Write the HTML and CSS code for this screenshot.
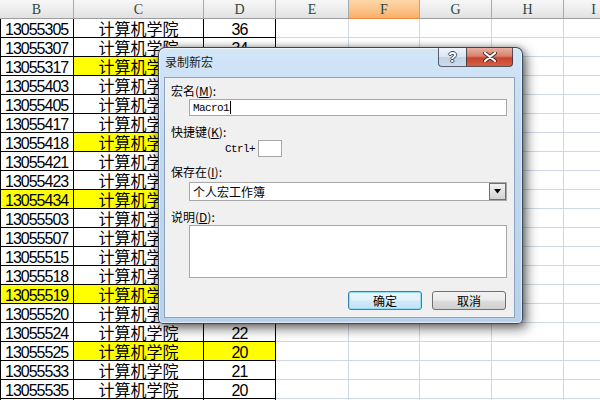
FILE: index.html
```html
<!DOCTYPE html>
<html lang="zh">
<head>
<meta charset="utf-8">
<link rel="stylesheet" href="styles.css">
</head>
<body>
<div class="sheet">
  <div class="h">B</div><div class="h">C</div><div class="h">D</div><div class="h">E</div><div class="h sel">F</div><div class="h">G</div><div class="h">H</div><div class="h">I</div>

  <div class="c k b">13055305</div><div class="c k m">计算机学院</div><div class="c k d">36</div><div class="c"></div><div class="c"></div><div class="c"></div><div class="c"></div><div class="c"></div>
  <div class="c k b">13055307</div><div class="c k m">计算机学院</div><div class="c k d">34</div><div class="c"></div><div class="c"></div><div class="c"></div><div class="c"></div><div class="c"></div>
  <div class="c k b">13055317</div><div class="c k m y">计算机学院</div><div class="c k d y"></div><div class="c"></div><div class="c"></div><div class="c"></div><div class="c"></div><div class="c"></div>
  <div class="c k b">13055403</div><div class="c k m">计算机学院</div><div class="c k d"></div><div class="c"></div><div class="c"></div><div class="c"></div><div class="c"></div><div class="c"></div>
  <div class="c k b">13055405</div><div class="c k m">计算机学院</div><div class="c k d"></div><div class="c"></div><div class="c"></div><div class="c"></div><div class="c"></div><div class="c"></div>
  <div class="c k b">13055417</div><div class="c k m">计算机学院</div><div class="c k d"></div><div class="c"></div><div class="c"></div><div class="c"></div><div class="c"></div><div class="c"></div>
  <div class="c k b">13055418</div><div class="c k m y">计算机学院</div><div class="c k d y"></div><div class="c"></div><div class="c"></div><div class="c"></div><div class="c"></div><div class="c"></div>
  <div class="c k b">13055421</div><div class="c k m">计算机学院</div><div class="c k d"></div><div class="c"></div><div class="c"></div><div class="c"></div><div class="c"></div><div class="c"></div>
  <div class="c k b">13055423</div><div class="c k m">计算机学院</div><div class="c k d"></div><div class="c"></div><div class="c"></div><div class="c"></div><div class="c"></div><div class="c"></div>
  <div class="c k b y">13055434</div><div class="c k m y">计算机学院</div><div class="c k d y"></div><div class="c"></div><div class="c"></div><div class="c"></div><div class="c"></div><div class="c"></div>
  <div class="c k b">13055503</div><div class="c k m">计算机学院</div><div class="c k d"></div><div class="c"></div><div class="c"></div><div class="c"></div><div class="c"></div><div class="c"></div>
  <div class="c k b">13055507</div><div class="c k m">计算机学院</div><div class="c k d"></div><div class="c"></div><div class="c"></div><div class="c"></div><div class="c"></div><div class="c"></div>
  <div class="c k b">13055515</div><div class="c k m">计算机学院</div><div class="c k d"></div><div class="c"></div><div class="c"></div><div class="c"></div><div class="c"></div><div class="c"></div>
  <div class="c k b">13055518</div><div class="c k m">计算机学院</div><div class="c k d"></div><div class="c"></div><div class="c"></div><div class="c"></div><div class="c"></div><div class="c"></div>
  <div class="c k b y">13055519</div><div class="c k m y">计算机学院</div><div class="c k d y"></div><div class="c"></div><div class="c"></div><div class="c"></div><div class="c"></div><div class="c"></div>
  <div class="c k b">13055520</div><div class="c k m">计算机学院</div><div class="c k d"></div><div class="c"></div><div class="c"></div><div class="c"></div><div class="c"></div><div class="c"></div>
  <div class="c k b">13055524</div><div class="c k m">计算机学院</div><div class="c k d">22</div><div class="c"></div><div class="c"></div><div class="c"></div><div class="c"></div><div class="c"></div>
  <div class="c k b">13055525</div><div class="c k m y">计算机学院</div><div class="c k d y">20</div><div class="c"></div><div class="c"></div><div class="c"></div><div class="c"></div><div class="c"></div>
  <div class="c k b">13055533</div><div class="c k m">计算机学院</div><div class="c k d">21</div><div class="c"></div><div class="c"></div><div class="c"></div><div class="c"></div><div class="c"></div>
  <div class="c k b">13055535</div><div class="c k m">计算机学院</div><div class="c k d">20</div><div class="c"></div><div class="c"></div><div class="c"></div><div class="c"></div><div class="c"></div>
  <div class="c k b"></div><div class="c k m"></div><div class="c k d"></div><div class="c"></div><div class="c"></div><div class="c"></div><div class="c"></div><div class="c"></div>
</div>

<div class="dialog">
  <div class="titlebar">
    <span class="title">录制新宏</span>
    <div class="capbtns">
      <div class="cap help">?</div>
      <div class="cap close">
        <svg width="14" height="10" viewBox="0 0 14 10">
          <path d="M2 1 L12 9 M12 1 L2 9" stroke="#4a2a25" stroke-width="4" stroke-linecap="round"/>
          <path d="M2 1 L12 9 M12 1 L2 9" stroke="#ffffff" stroke-width="2.2" stroke-linecap="round"/>
        </svg>
      </div>
    </div>
  </div>
  <div class="client">
    <div class="lbl">宏名(<u>M</u>):</div>
    <div class="field name"><span class="mono">Macro1</span><span class="caret"></span></div>
    <div class="lbl gap9">快捷键(<u>K</u>):</div>
    <div class="shortcut"><span class="mono ctrl">Ctrl+</span><div class="keybox"></div></div>
    <div class="lbl gap8">保存在(<u>I</u>):</div>
    <div class="field select"><span class="seltext">个人宏工作簿</span>
      <div class="arrow"><svg width="7" height="5" viewBox="0 0 7 5"><path d="M0 0 H7 L3.5 4.5 Z" fill="#000"/></svg></div>
    </div>
    <div class="lbl gap9">说明(<u>D</u>):</div>
    <div class="field desc"></div>
    <div class="buttons">
      <div class="btn default">确定</div>
      <div class="btn">取消</div>
    </div>
  </div>
</div>
</body>
</html>
```

FILE: styles.css
```css
html, body {
  margin: 0;
  padding: 0;
}
body {
  width: 600px;
  height: 400px;
  overflow: hidden;
  position: relative;
  background: #ffffff;
  font-family: "Liberation Sans", "Noto Sans CJK SC", sans-serif;
}

.sheet {
  display: grid;
  grid-template-columns: 74px 130px 72px 73px 71px 72px 72px 60px;
  grid-template-rows: 19px;
  grid-auto-rows: 19px;
}

.h {
  box-sizing: border-box;
  height: 19px;
  border-right: 1px solid #a9a9a9;
  border-bottom: 1px solid #9c9c9c;
  background: linear-gradient(180deg, #f7f7f7 0%, #ececec 55%, #e1e1e1 100%);
  color: #2b4744;
  font-family: "Liberation Serif", serif;
  font-size: 14px;
  line-height: 19px;
  text-align: center;
}
.h.sel {
  background: linear-gradient(180deg, #fbd7a8 0%, #fbc38a 55%, #f9ae6a 100%);
  border-bottom-color: #e98a3c;
  border-right-color: #c8a27c;
}

.c {
  box-sizing: border-box;
  height: 19px;
  overflow: hidden;
  border-right: 1px solid #d0d7e5;
  border-bottom: 1px solid #d0d7e5;
  font-size: 16px;
  line-height: 22px;
  color: #000;
  white-space: nowrap;
}
.c.k {
  border-right-color: #000;
  border-bottom-color: #000;
}
.c.b {
  border-left: 1px solid #000;
  padding-left: 4px;
  letter-spacing: -1px;
}
.c.m {
  font-family: "Noto Sans CJK SC", sans-serif;
  text-align: center;
  line-height: 19px;
}
.c.d {
  text-align: center;
  letter-spacing: -1px;
}
.c.y {
  background: #ffff00;
}

/* Dialog window */
.dialog {
  position: absolute;
  left: 158px;
  top: 47px;
  width: 365px;
  height: 277px;
  box-sizing: border-box;
  padding: 0 7px 5px 5px;
  border: 1px solid rgba(30, 45, 65, 0.85);
  border-radius: 7px 7px 5px 5px;
  background: linear-gradient(180deg, #d3e6f8 0%, #c1d9f1 35%, #b9d2ec 100%);
  box-shadow: inset 0 0 0 1px rgba(255, 255, 255, 0.6),
              4px 5px 12px rgba(0, 0, 0, 0.5),
              0 0 7px rgba(0, 0, 0, 0.35);
  display: flex;
  flex-direction: column;
  font-family: "Noto Sans CJK SC", sans-serif;
}

.titlebar {
  height: 29px;
  display: flex;
  justify-content: space-between;
  align-items: flex-start;
}
.title {
  margin-left: 1px;
  margin-top: 7px;
  font-size: 12px;
  line-height: 14px;
  color: #1a1a1a;
}
.capbtns {
  display: flex;
  margin-right: 2px;
}
.cap {
  box-sizing: border-box;
  height: 19px;
  border: 1px solid rgba(40, 50, 65, 0.75);
  border-top: none;
  display: flex;
  align-items: center;
  justify-content: center;
}
.help {
  width: 28px;
  border-right: none;
  border-radius: 0 0 0 4px;
  background: linear-gradient(180deg, #eef4fb 0%, #dbe6f2 48%, #c3d2e3 52%, #cddbea 100%);
  color: #ffffff;
  font-family: "Liberation Sans", sans-serif;
  font-weight: bold;
  font-size: 14px;
  line-height: 18px;
  text-shadow: 1px 0 0 #3e4a58, -1px 0 0 #3e4a58, 0 1px 0 #3e4a58, 0 -1px 0 #3e4a58;
}
.close {
  width: 47px;
  border-radius: 0 0 4px 0;
  background: linear-gradient(180deg, #eab0a2 0%, #d9806d 45%, #c7452f 55%, #d65e45 100%);
}
.close svg {
  display: block;
}

.client {
  box-sizing: border-box;
  width: 351px;
  height: 241px;
  background: #f0f0f0;
  border: 1px solid #8ea4bc;
  padding: 6px 7px 0 6px;
  display: flex;
  flex-direction: column;
  font-size: 12px;
  color: #000;
}

.lbl {
  height: 14px;
  line-height: 14px;
  font-size: 12px;
}
.lbl u {
  text-decoration: underline;
}
.gap9 { margin-top: 9px; }
.gap8 { margin-top: 8px; }

.field {
  box-sizing: border-box;
  margin-left: 18px;
  width: 318px;
  background: #ffffff;
  border: 1px solid #a7a7a7;
}
.name {
  margin-top: 1px;
  height: 17px;
  padding-left: 3px;
  display: flex;
  align-items: center;
}
.mono {
  font-family: "Liberation Mono", monospace;
  font-size: 11px;
  letter-spacing: -0.6px;
  color: #000;
}
.caret {
  display: inline-block;
  width: 1px;
  height: 13px;
  background: #000;
  margin-left: 1px;
}

.shortcut {
  margin-top: 1px;
  height: 17px;
  display: flex;
  align-items: center;
}
.ctrl {
  margin-left: 54px;
  width: 33px;
}
.keybox {
  box-sizing: border-box;
  width: 24px;
  height: 17px;
  background: #ffffff;
  border: 1px solid #a7a7a7;
}

.select {
  margin-top: 3px;
  height: 19px;
  display: flex;
  align-items: center;
  justify-content: space-between;
  padding-left: 3px;
}
.seltext {
  font-size: 12px;
  line-height: 14px;
}
.arrow {
  box-sizing: border-box;
  width: 17px;
  height: 17px;
  border: 1px solid #6f6f6f;
  background: linear-gradient(180deg, #f3f3f3 0%, #e2e2e2 50%, #d2d2d2 100%);
  display: flex;
  align-items: center;
  justify-content: center;
}
.arrow svg {
  display: block;
}

.desc {
  margin-top: 1px;
  height: 53px;
}

.buttons {
  margin-top: 13px;
  display: flex;
  justify-content: flex-end;
  gap: 10px;
  padding-right: 1px;
}
.btn {
  box-sizing: border-box;
  width: 74px;
  height: 19px;
  border: 1px solid #707070;
  border-radius: 3px;
  background: linear-gradient(180deg, #f2f2f2 0%, #ebebeb 49%, #dddddd 51%, #cfcfcf 100%);
  font-size: 12px;
  line-height: 17px;
  text-align: center;
  color: #000;
}
.btn.default {
  border-color: #3c7fb1;
  box-shadow: inset 0 0 0 1px #8fdcf6;
  background: linear-gradient(180deg, #eaf6fd 0%, #e2f1fb 49%, #d1eaf9 51%, #c4e3f7 100%);
}
```
